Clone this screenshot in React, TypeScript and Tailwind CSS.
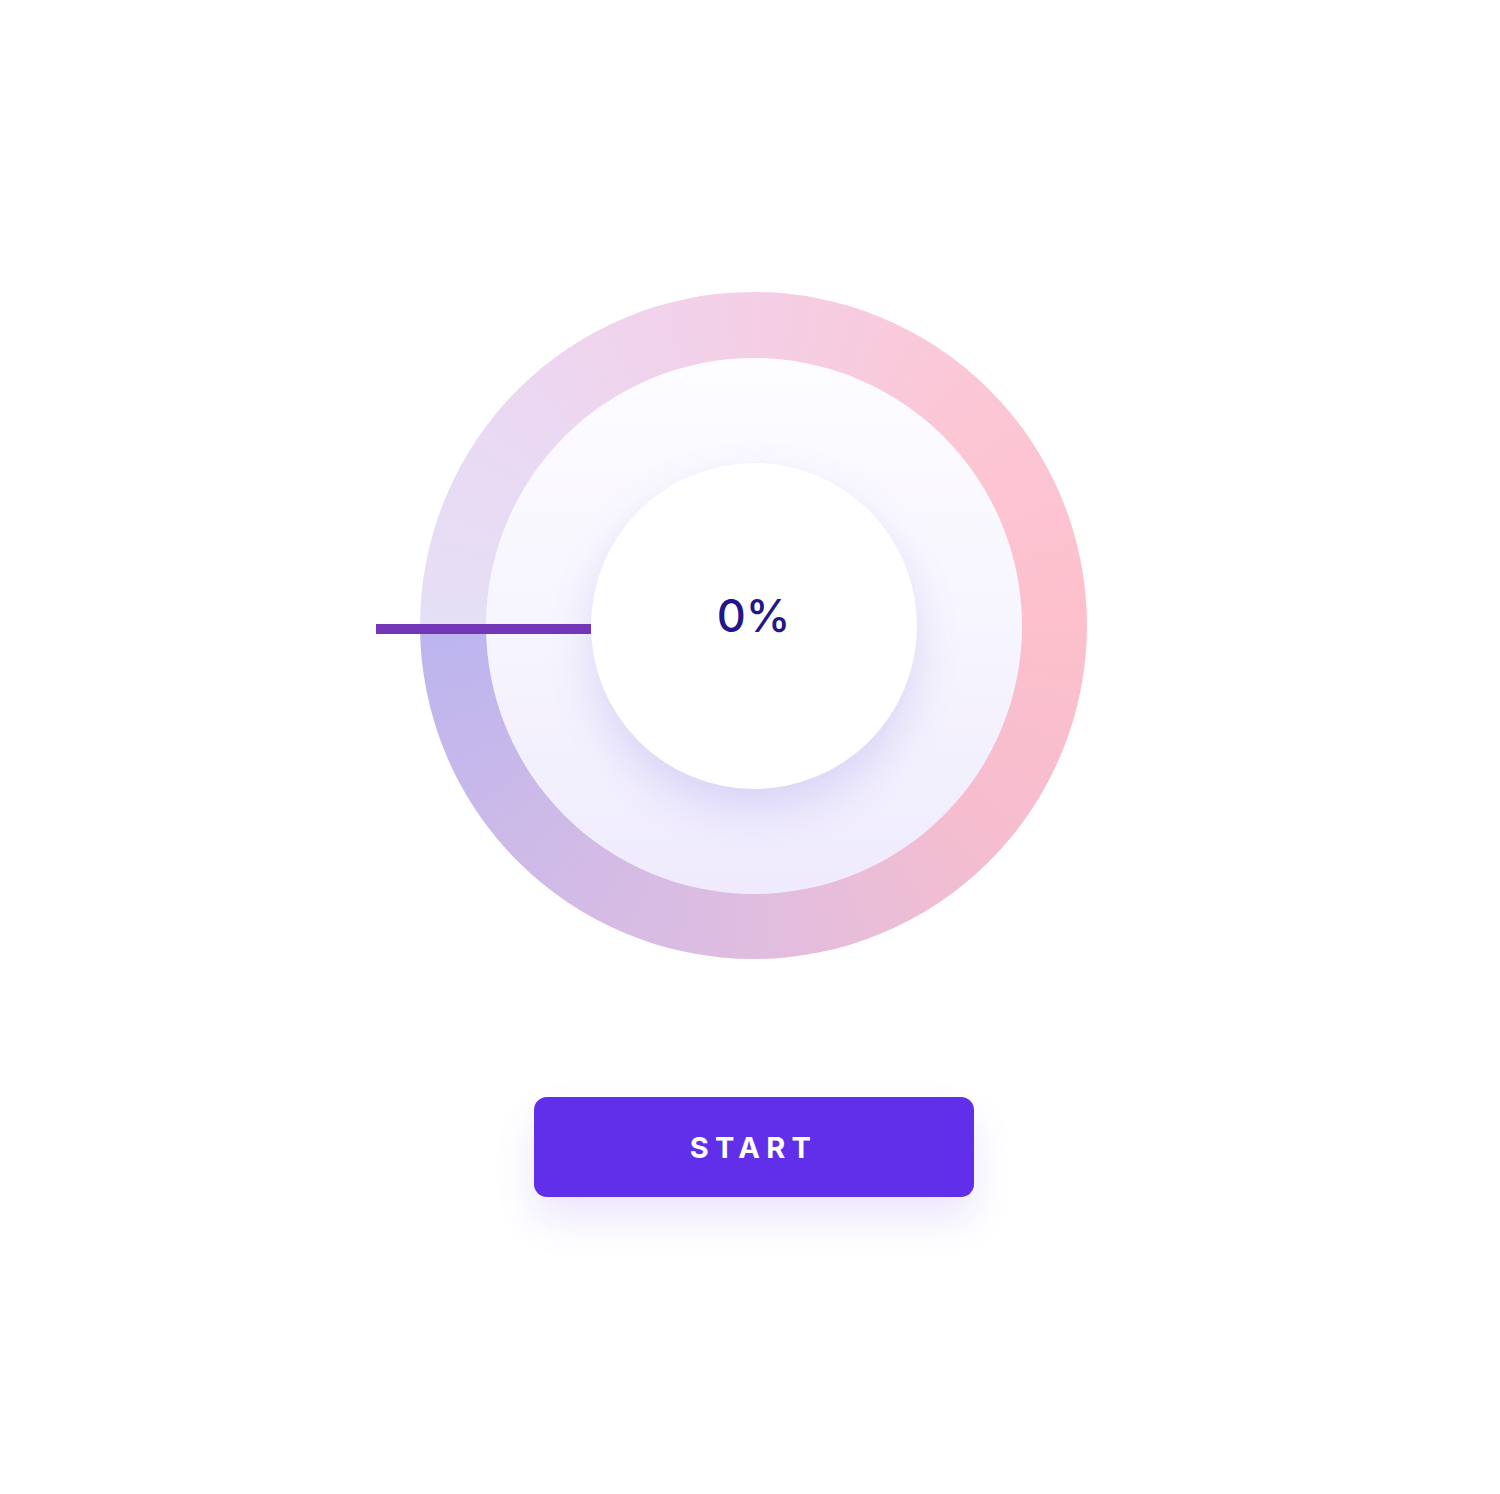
import React from "react";

export default function App() {
  return (
    <div className="min-h-screen w-full bg-white flex flex-col items-center pt-[292px] pl-[7px] font-['Inter',sans-serif]">
      <div className="relative w-[667px] h-[667px] rounded-full bg-[conic-gradient(from_270deg,#e4e0f6,#ebd8f2_12%,#f4cfe6_25%,#fcc6d4_38%,#fdc0cc_50%,#f5bdcf_62%,#e0bde0_75%,#cdbae8_88%,#bcb5ef)] flex items-center justify-center">
        <div className="w-[536px] h-[536px] rounded-full bg-[linear-gradient(180deg,#fdfcff_0%,#f7f5fe_50%,#efebfd_100%)] flex items-center justify-center">
          <div className="w-[326px] h-[326px] rounded-full bg-white shadow-[0_20px_44px_rgba(120,100,220,0.2)] flex items-center justify-center">
            <span className="text-[45px] font-medium text-[#21168c] leading-none -mt-[20px]">0%</span>
          </div>
        </div>
        <div className="absolute left-[-44px] top-[332px] w-[215px] h-[10px] bg-[#7236b7]" />
      </div>
      <button className="mt-[138px] w-[440px] h-[100px] rounded-[13px] bg-[#612ee9] shadow-[0_22px_40px_rgba(97,46,233,0.12)] flex items-center justify-center">
        <span className="text-[29px] font-bold text-white tracking-[0.22em] leading-none">START</span>
      </button>
    </div>
  );
}
